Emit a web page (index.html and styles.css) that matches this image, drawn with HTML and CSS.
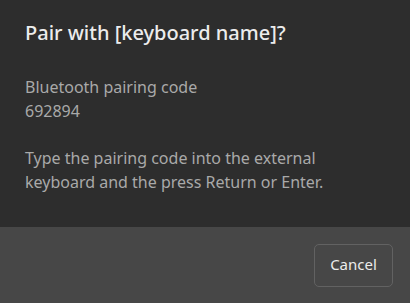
FILE: index.html
```html
<!DOCTYPE html>
<html lang="en">
<head>
  <meta charset="UTF-8"/>
  <title>Pair keyboard</title>
  <link rel="stylesheet" href="styles.css">
</head>
<body>
  <div class="dialog">
    <div class="content">
      <h2>Pair with [keyboard name]?</h2>
      <p class="code">Bluetooth pairing code<br>692894</p>
      <p>Type the pairing code into the external keyboard and the press Return or Enter.</p>
    </div>
    <div class="actions">
      <button type="button">Cancel</button>
    </div>
  </div>
</body>
</html>
```

FILE: styles.css
```css
body {
  margin: 0;
  font-family: 'Noto Sans', 'Open Sans', sans-serif;
  background: #2d2d2d;
}
.dialog {
  width: 410px;
  height: 303px;
  display: flex;
  flex-direction: column;
}
.content {
  flex: 1;
  padding: 20px 25px 0;
}
h2 {
  margin: 0 0 29px;
  font-size: 20px;
  font-weight: 500;
  color: #ececec;
  line-height: 26px;
}
p {
  margin: 0 0 23px;
  max-width: 320px;
  font-size: 16px;
  line-height: 24px;
  color: #a9a9a9;
}
.actions {
  height: 76px;
  background: #474747;
  display: flex;
  justify-content: flex-end;
  align-items: center;
  padding: 0 17px;
}
button {
  width: 79px;
  height: 43px;
  padding: 0 0 2px;
  background: transparent;
  border: 1px solid #626262;
  border-radius: 5px;
  color: #ececec;
  font-family: inherit;
  font-size: 15px;
}
```
